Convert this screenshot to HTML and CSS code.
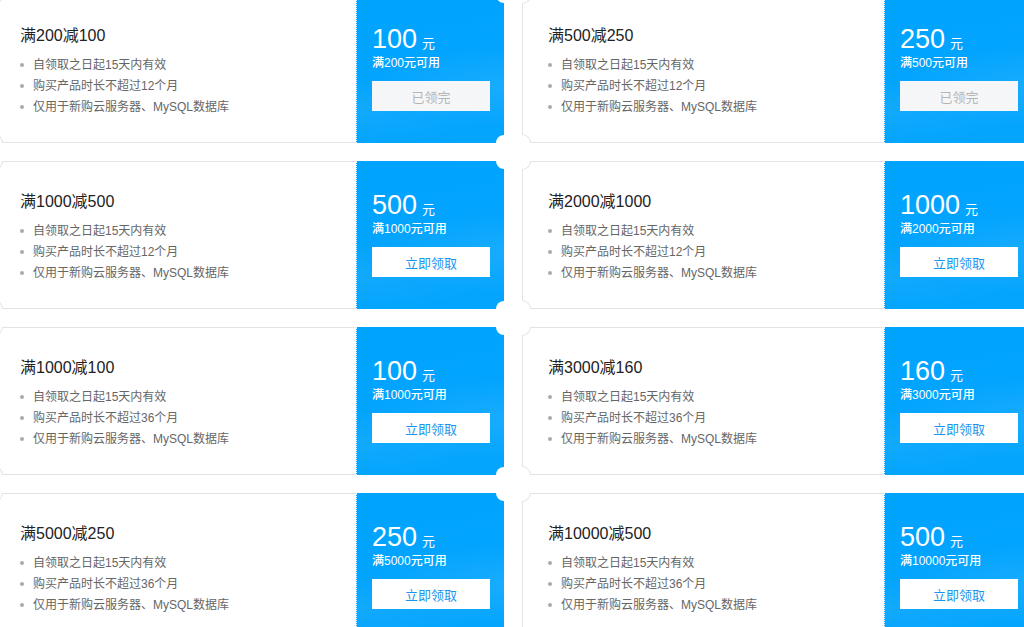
FILE: index.html
```html
<!DOCTYPE html>
<html lang="zh-CN">
<head>
  <meta charset="UTF-8">
  <meta name="viewport" content="width=device-width, initial-scale=1.0">
  <title>优惠券</title>
  <link rel="stylesheet" href="styles.css">
</head>
<body>

  <div class="coupon-list">

    <!-- row 1 -->
    <div class="coupon">
      <div class="coupon-info">
        <h3 class="coupon-title">满200减100</h3>
        <ul class="coupon-rules">
          <li>自领取之日起15天内有效</li>
          <li>购买产品时长不超过12个月</li>
          <li>仅用于新购云服务器、MySQL数据库</li>
        </ul>
      </div>
      <div class="coupon-side">
        <div class="coupon-amount">100<span>元</span></div>
        <div class="coupon-cond">满200元可用</div>
        <button class="coupon-btn is-done">已领完</button>
      </div>
    </div>

    <div class="coupon">
      <div class="coupon-info">
        <h3 class="coupon-title">满500减250</h3>
        <ul class="coupon-rules">
          <li>自领取之日起15天内有效</li>
          <li>购买产品时长不超过12个月</li>
          <li>仅用于新购云服务器、MySQL数据库</li>
        </ul>
      </div>
      <div class="coupon-side">
        <div class="coupon-amount">250<span>元</span></div>
        <div class="coupon-cond">满500元可用</div>
        <button class="coupon-btn is-done">已领完</button>
      </div>
    </div>

    <!-- row 2 -->
    <div class="coupon">
      <div class="coupon-info">
        <h3 class="coupon-title">满1000减500</h3>
        <ul class="coupon-rules">
          <li>自领取之日起15天内有效</li>
          <li>购买产品时长不超过12个月</li>
          <li>仅用于新购云服务器、MySQL数据库</li>
        </ul>
      </div>
      <div class="coupon-side">
        <div class="coupon-amount">500<span>元</span></div>
        <div class="coupon-cond">满1000元可用</div>
        <button class="coupon-btn">立即领取</button>
      </div>
    </div>

    <div class="coupon">
      <div class="coupon-info">
        <h3 class="coupon-title">满2000减1000</h3>
        <ul class="coupon-rules">
          <li>自领取之日起15天内有效</li>
          <li>购买产品时长不超过12个月</li>
          <li>仅用于新购云服务器、MySQL数据库</li>
        </ul>
      </div>
      <div class="coupon-side">
        <div class="coupon-amount">1000<span>元</span></div>
        <div class="coupon-cond">满2000元可用</div>
        <button class="coupon-btn">立即领取</button>
      </div>
    </div>

    <!-- row 3 -->
    <div class="coupon">
      <div class="coupon-info">
        <h3 class="coupon-title">满1000减100</h3>
        <ul class="coupon-rules">
          <li>自领取之日起15天内有效</li>
          <li>购买产品时长不超过36个月</li>
          <li>仅用于新购云服务器、MySQL数据库</li>
        </ul>
      </div>
      <div class="coupon-side">
        <div class="coupon-amount">100<span>元</span></div>
        <div class="coupon-cond">满1000元可用</div>
        <button class="coupon-btn">立即领取</button>
      </div>
    </div>

    <div class="coupon">
      <div class="coupon-info">
        <h3 class="coupon-title">满3000减160</h3>
        <ul class="coupon-rules">
          <li>自领取之日起15天内有效</li>
          <li>购买产品时长不超过36个月</li>
          <li>仅用于新购云服务器、MySQL数据库</li>
        </ul>
      </div>
      <div class="coupon-side">
        <div class="coupon-amount">160<span>元</span></div>
        <div class="coupon-cond">满3000元可用</div>
        <button class="coupon-btn">立即领取</button>
      </div>
    </div>

    <!-- row 4 -->
    <div class="coupon">
      <div class="coupon-info">
        <h3 class="coupon-title">满5000减250</h3>
        <ul class="coupon-rules">
          <li>自领取之日起15天内有效</li>
          <li>购买产品时长不超过36个月</li>
          <li>仅用于新购云服务器、MySQL数据库</li>
        </ul>
      </div>
      <div class="coupon-side">
        <div class="coupon-amount">250<span>元</span></div>
        <div class="coupon-cond">满5000元可用</div>
        <button class="coupon-btn">立即领取</button>
      </div>
    </div>

    <div class="coupon">
      <div class="coupon-info">
        <h3 class="coupon-title">满10000减500</h3>
        <ul class="coupon-rules">
          <li>自领取之日起15天内有效</li>
          <li>购买产品时长不超过36个月</li>
          <li>仅用于新购云服务器、MySQL数据库</li>
        </ul>
      </div>
      <div class="coupon-side">
        <div class="coupon-amount">500<span>元</span></div>
        <div class="coupon-cond">满10000元可用</div>
        <button class="coupon-btn">立即领取</button>
      </div>
    </div>

  </div>

</body>
</html>
```

FILE: styles.css
```css
body {
  margin: 0;
  background-color: #fff;
  font-family: "Liberation Sans", "Noto Sans CJK SC", sans-serif;
  overflow: hidden;
}
.coupon-list {
  display: grid;
  grid-template-columns: 510px 510px;
  column-gap: 18px;
  row-gap: 18px;
  margin: -5px 0 0 -6px;
}
.coupon {
  position: relative;
  display: flex;
  height: 148px;
  box-sizing: border-box;
  border: 1px solid #e3e3e3;
  background-color: #fff;
}
/* notches on the left corners */
.coupon::before, .coupon::after {
  content: "";
  position: absolute;
  left: -1px;
  width: 8px;
  height: 8px;
  background-color: #fff;
  border-right: 1px solid #e3e3e3;
}
.coupon::before {
  top: -1px;
  border-bottom: 1px solid #e3e3e3;
  border-bottom-right-radius: 9px;
}
.coupon::after {
  bottom: -1px;
  border-top: 1px solid #e3e3e3;
  border-top-right-radius: 9px;
}
.coupon-info {
  flex: 1;
  padding: 30px 0 0 25px;
}
.coupon-title {
  margin: 0 0 9px;
  font-size: 16px;
  line-height: 20px;
  font-weight: normal;
  color: #222;
}
.coupon-rules {
  margin: 0;
  padding: 0;
  list-style: none;
}
.coupon-rules li {
  font-size: 12px;
  line-height: 21px;
  color: #666;
}
.coupon-rules li::before {
  content: "";
  display: inline-block;
  width: 4px;
  height: 4px;
  margin: 0 9px 2px 0;
  border-radius: 50%;
  background-color: #aaa;
  vertical-align: middle;
}
.coupon-side {
  position: relative;
  width: 148px;
  box-sizing: border-box;
  margin: -1px -1px -1px 0;
  padding: 29px 0 0 15px;
  border-left: 1px dotted #e8f6ff;
  color: #fff;
  background:
    radial-gradient(ellipse 220px 60px at 110% 62%, rgba(255, 255, 255, 0.09), rgba(255, 255, 255, 0) 70%),
    radial-gradient(ellipse 200px 50px at 0% 78%, rgba(255, 255, 255, 0.06), rgba(255, 255, 255, 0) 70%),
    linear-gradient(170deg, #00a3ff 0%, #04a5fd 100%);
}
/* notches on the right corners */
.coupon-side::before, .coupon-side::after {
  content: "";
  position: absolute;
  right: 0;
  width: 8px;
  height: 8px;
  background-color: #fff;
}
.coupon-side::before {
  top: 0;
  border-bottom-left-radius: 8px;
}
.coupon-side::after {
  bottom: 0;
  border-top-left-radius: 8px;
}
.coupon-amount {
  display: flex;
  align-items: baseline;
  height: 30px;
  font-size: 27px;
  line-height: 30px;
}
.coupon-amount span {
  margin-left: 5px;
  font-size: 13px;
  line-height: 1;
}
.coupon-cond {
  margin-top: 1px;
  font-size: 12px;
  line-height: 16px;
  font-weight: 500;
}
.coupon-btn {
  display: block;
  width: 118px;
  height: 30px;
  margin-top: 10px;
  padding: 0;
  border: none;
  background-color: #fff;
  color: #1a96ef;
  font-family: inherit;
  font-size: 13px;
  cursor: pointer;
}
.coupon-btn.is-done {
  background-color: #f5f6f8;
  color: #b5b5b5;
  cursor: default;
}
```
